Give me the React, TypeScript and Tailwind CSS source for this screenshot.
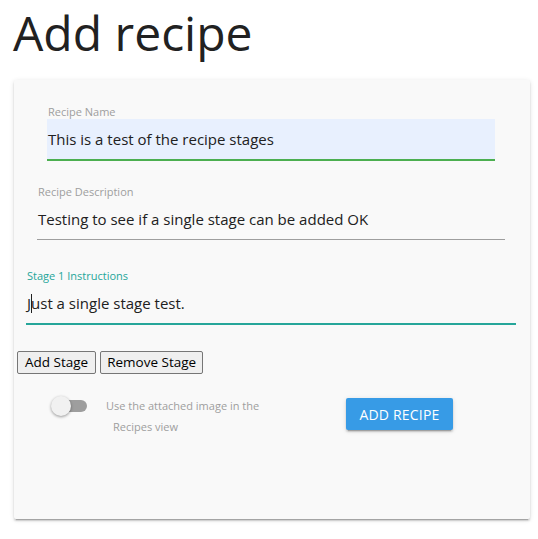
import { useState } from 'react';

export default function App() {
  const [useImage, setUseImage] = useState(false);

  return (
    <div className="min-h-screen bg-white font-['Open_Sans','Noto_Sans',sans-serif] text-[#212121]">
      <h1 className="pl-[13px] pt-[3px] text-[48px] leading-[60px] font-normal text-[#212121]">Add recipe</h1>

      <div className="mx-[14px] mt-[17px] h-[439px] w-[516px] rounded-[2px] bg-[#f9f9f9] pt-[25px] pl-[12px] pr-[14px] shadow-[0_2px_2px_rgba(0,0,0,0.14),0_1px_5px_rgba(0,0,0,0.12),0_3px_1px_-2px_rgba(0,0,0,0.2)]">
        <div className="px-[11px]">
          <div className="px-[10px]">
            <label className="block pl-px text-[11px] leading-[14px] text-[#9e9e9e]">Recipe Name</label>
            <div className="flex h-[42px] items-center border-b-2 border-[#4caf50] bg-[#e8f0fe] pl-px pt-px text-[15px] text-[#212121]">
              This is a test of the recipe stages
            </div>
          </div>

          <div className="mt-[24px]">
            <label className="block pl-px text-[11px] leading-[14px] text-[#9e9e9e]">Recipe Description</label>
            <div className="flex h-[41px] items-center border-b border-[#9e9e9e] pl-px text-[15px] text-[#212121]">
              Testing to see if a single stage can be added OK
            </div>
          </div>
        </div>

        <div className="mt-[29px]">
          <label className="block pl-px text-[11px] leading-[14px] text-[#26a69a]">Stage 1 Instructions</label>
          <div className="relative flex h-[42px] items-center border-b-2 border-[#26a69a] pl-px text-[15px] text-[#212121]">
            Just a single stage test.
            <span className="absolute left-[5px] top-[11px] h-[19px] w-px bg-[#212121]" />
          </div>
        </div>

        <div className="-ml-[9px] mt-[26px] flex gap-[4px]">
          <button className="h-[23px] rounded-[2px] border border-[#767676] bg-[#efefef] px-[7px] text-[13.5px] leading-none text-black">Add Stage</button>
          <button className="h-[23px] rounded-[2px] border border-[#767676] bg-[#efefef] px-[6px] text-[13.5px] leading-none text-black">Remove Stage</button>
        </div>

        <div className="mt-[21px] flex items-start">
          <button
            onClick={() => setUseImage(!useImage)}
            className="relative ml-[31px] mt-[5px] h-[12px] w-[30px] rounded-full bg-[#9e9e9e]"
          >
            <span className="absolute -left-[6px] -top-[4px] h-[20px] w-[20px] rounded-full bg-[#f1f1f1] shadow-[0_1px_3px_rgba(0,0,0,0.4)]" />
          </button>
          <div className="ml-[19px] w-[160px] text-[11px] leading-[21px] text-[#9e9e9e]">
            <div>Use the attached image in the</div>
            <div className="pl-[7px]">Recipes view</div>
          </div>
          <button className="ml-[80px] mt-[3px] h-[32px] w-[107px] rounded-[2px] bg-[#379be6] text-[14px] tracking-[0.2px] text-white shadow-[0_2px_2px_rgba(0,0,0,0.14),0_3px_1px_-2px_rgba(0,0,0,0.2),0_1px_5px_rgba(0,0,0,0.12)]">
            ADD RECIPE
          </button>
        </div>
      </div>
    </div>
  );
}
